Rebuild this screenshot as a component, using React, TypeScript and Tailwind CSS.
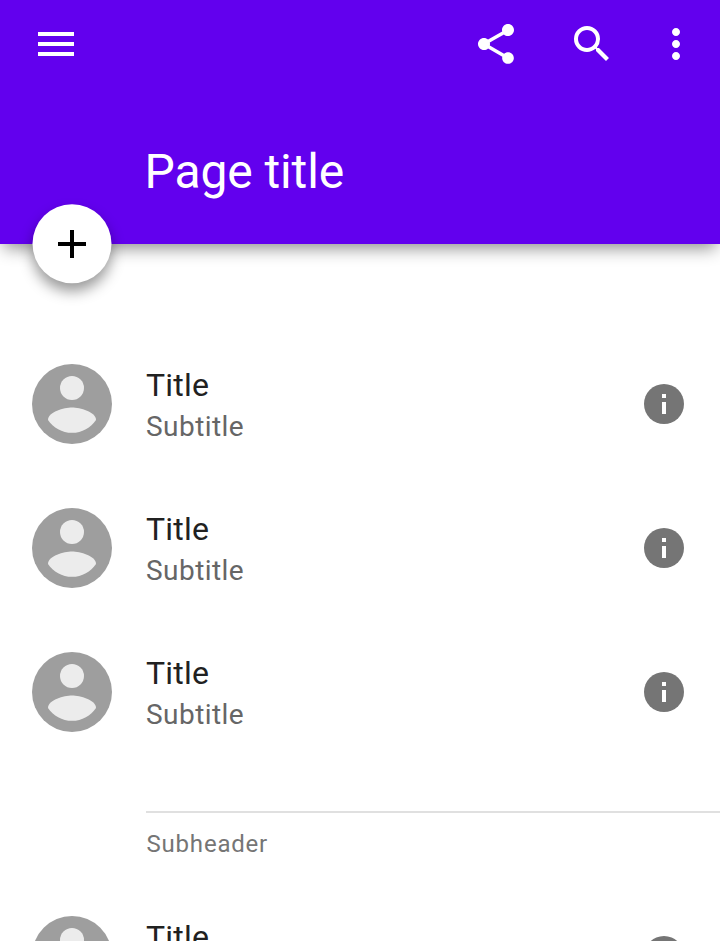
import React from "react";

function Avatar() {
  return (
    <svg className="h-20 w-20 shrink-0" viewBox="2 2 20 20">
      <circle cx="12" cy="12" r="10" fill="#9e9e9e" />
      <circle cx="12" cy="8" r="3" fill="#ececec" />
      <path d="M12 19.2c-2.5 0-4.71-1.28-6-3.22.03-1.99 4-3.08 6-3.08 1.99 0 5.97 1.09 6 3.08-1.29 1.94-3.5 3.22-6 3.22z" fill="#ececec" />
    </svg>
  );
}

function Row() {
  return (
    <li className="flex h-[144px] shrink-0 items-center pl-8 pr-9">
      <Avatar />
      <div className="ml-[34px] flex-1 pt-[5px]">
        <div className="text-[32px] leading-[40px] tracking-[0.2px] text-[#212121]">Title</div>
        <div className="text-[28px] leading-[43px] tracking-[0.45px] text-[#666666]">Subtitle</div>
      </div>
      <svg className="h-10 w-10" viewBox="0 0 40 40">
        <circle cx="20" cy="20" r="20" fill="#757575" />
        <path d="M18 10h4v4h-4zM18 18h4v12h-4z" fill="#fff" />
      </svg>
    </li>
  );
}

export default function App() {
  return (
    <div className="flex h-[941px] w-[720px] flex-col overflow-hidden bg-white font-['Roboto',sans-serif]">
      <header className="relative h-[244px] shrink-0 bg-[#6200ee] shadow-[0_8px_16px_-4px_rgba(0,0,0,0.45)]">
        <div className="flex h-[88px] items-center pl-8 pr-5 text-white">
          <svg className="h-12 w-12" viewBox="0 0 24 24" fill="currentColor"><path d="M3 18h18v-2H3v2zm0-5h18v-2H3v2zm0-7v2h18V6H3z" /></svg>
          <svg className="ml-auto h-12 w-12" viewBox="0 0 24 24" fill="currentColor"><path d="M18 16.08c-.76 0-1.44.3-1.96.77L8.91 12.7c.05-.23.09-.46.09-.7s-.04-.47-.09-.7l7.05-4.11c.54.5 1.25.81 2.04.81 1.66 0 3-1.34 3-3s-1.34-3-3-3-3 1.34-3 3c0 .24.04.47.09.7L8.04 9.81C7.5 9.31 6.79 9 6 9c-1.66 0-3 1.34-3 3s1.34 3 3 3c.79 0 1.5-.31 2.04-.81l7.12 4.16c-.05.21-.08.43-.08.65 0 1.61 1.31 2.92 2.92 2.92s2.92-1.31 2.92-2.92-1.31-2.92-2.92-2.92z" /></svg>
          <svg className="ml-12 h-12 w-12" viewBox="0 0 24 24" fill="currentColor"><path d="M15.5 14h-.79l-.28-.27A6.471 6.471 0 0 0 16 9.5 6.5 6.5 0 1 0 9.5 16c1.61 0 3.09-.59 4.23-1.57l.27.28v.79l5 4.99L20.49 19l-4.99-5zm-6 0C7.01 14 5 11.99 5 9.5S7.01 5 9.5 5 14 7.01 14 9.5 11.99 14 9.5 14z" /></svg>
          <svg className="ml-9 h-12 w-12" viewBox="0 0 24 24" fill="currentColor"><path d="M12 8c1.1 0 2-.9 2-2s-.9-2-2-2-2 .9-2 2 .9 2 2 2zm0 2c-1.1 0-2 .9-2 2s.9 2 2 2 2-.9 2-2-.9-2-2-2zm0 6c-1.1 0-2 .9-2 2s.9 2 2 2 2-.9 2-2-.9-2-2-2z" /></svg>
        </div>
        <h1 className="ml-[144.5px] mt-[54px] text-[48px] leading-[60px] tracking-[-0.1px] text-white">Page title</h1>
        <button className="absolute left-8 top-[204px] h-20 w-20 rounded-full">
          <svg className="h-20 w-20 overflow-visible drop-shadow-[0_8px_7px_rgba(0,0,0,0.4)]" viewBox="0 0 80 80">
            <circle cx="40" cy="39.8" r="39.5" fill="#fff" />
            <path d="M54 42H42v12h-4V42H26v-4h12V26h4v12h12z" fill="#000" />
          </svg>
        </button>
      </header>
      <ul className="mt-[88px] shrink-0">
        <Row /><Row /><Row />
      </ul>
      <div className="ml-[146px] mt-[47px] h-[73px] shrink-0 border-t-2 border-[#e0e0e0] pl-[0.5px] pt-[15px] text-[24px] leading-8 tracking-[0.8px] text-[#757575]">Subheader</div>
      <ul className="shrink-0"><Row /></ul>
    </div>
  );
}
